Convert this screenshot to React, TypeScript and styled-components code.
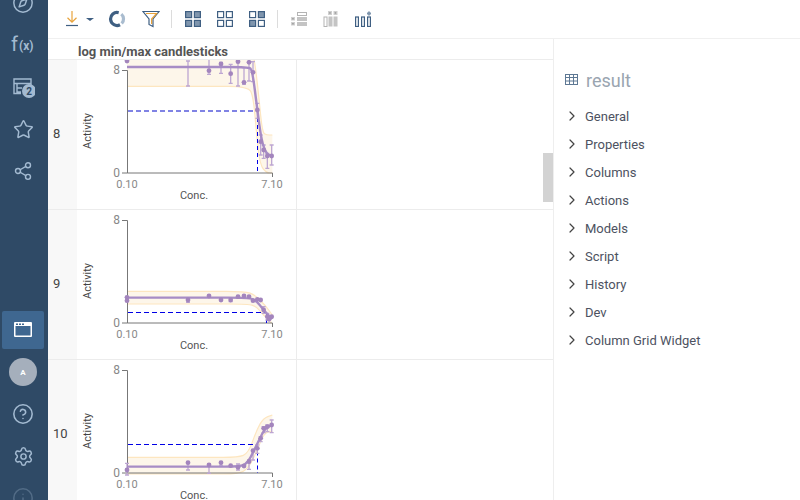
import React from "react";
import styled, { createGlobalStyle } from "styled-components";
import { ChevronRight, CircleHelp, Compass, Info, Settings, Share2, Star } from "lucide-react";

const GlobalStyle = createGlobalStyle`
  html, body {
    margin: 0;
    padding: 0;
    width: 800px;
    height: 500px;
    overflow: hidden;
    background: #fff;
    font-family: Roboto, "Liberation Sans", sans-serif;
  }
`;

const Page = styled.div`
  display: flex;
  width: 800px;
  height: 500px;
  overflow: hidden;
`;

const Sidebar = styled.nav`
  display: flex;
  flex-direction: column;
  flex: 0 0 48px;
  height: 500px;
  background: #2f4a66;
  color: #a3bad1;
  overflow: hidden;
`;

const NavTop = styled.div`
  display: flex;
  flex-direction: column;
  gap: 4px;
  margin-top: -16px;
`;

const NavBottom = styled.div`
  display: flex;
  flex-direction: column;
  gap: 4px;
  margin-top: auto;
  margin-bottom: -17px;
`;

const NavItem = styled.div<{ $active?: boolean; $dim?: boolean }>`
  display: flex;
  align-items: center;
  justify-content: center;
  flex: 0 0 38px;
  width: 42px;
  margin-left: 2px;
  border-radius: 2px;
  background: ${(p) => (p.$active ? "#3f6790" : "transparent")};
  opacity: ${(p) => (p.$dim ? 0.3 : 1)};
`;

const Avatar = styled.div`
  display: flex;
  align-items: center;
  justify-content: center;
  width: 28px;
  height: 28px;
  border-radius: 50%;
  background: #a5afbc;
  color: #fff;
  font-size: 8px;
  font-weight: 700;
`;

const Main = styled.div`
  display: flex;
  flex-direction: column;
  flex: 1;
  min-width: 0;
`;

const Toolbar = styled.div`
  display: flex;
  align-items: center;
  flex: 0 0 39px;
  box-sizing: border-box;
  padding-left: 12px;
  border-bottom: 1px solid #f0f0f0;
`;

const ToolGroup = styled.div`
  display: flex;
  align-items: center;
  justify-content: flex-start;
  gap: 7px;
  width: 41px;
  padding-left: 5px;
  box-sizing: border-box;
`;

const Tool = styled.div<{ $shift?: number }>`
  display: flex;
  align-items: center;
  justify-content: center;
  width: 32px;
  margin-left: ${(p) => p.$shift ?? 0}px;
`;

const Caret = styled.span`
  width: 0;
  height: 0;
  border-left: 4px solid transparent;
  border-right: 4px solid transparent;
  border-top: 3px solid #3f5f82;
`;

const Separator = styled.div`
  width: 1px;
  height: 18px;
  margin: 0 5px 0 4px;
  background: #dcdcdc;
`;

const Content = styled.div`
  display: flex;
  flex: 1;
  min-height: 0;
`;

const GridArea = styled.div`
  position: relative;
  flex: 0 0 505px;
  overflow: hidden;
`;

const GridHeader = styled.div`
  box-sizing: border-box;
  height: 21px;
  padding-left: 30px;
  border-bottom: 1px solid #ececec;
  color: #555;
  font-size: 13px;
  font-weight: 700;
  line-height: 26px;
  white-space: nowrap;
  overflow: hidden;
`;

const Row = styled.div`
  display: flex;
  box-sizing: border-box;
  height: 150px;
  border-bottom: 1px solid #ececec;
`;

const RowNumber = styled.div`
  display: flex;
  align-items: center;
  flex: 0 0 29px;
  box-sizing: border-box;
  padding: 0 0 2px 5px;
  background: #f8f8f8;
  color: #444;
  font-size: 13px;
`;

const Cell = styled.div`
  flex: 0 0 220px;
  box-sizing: border-box;
  border-right: 1px solid #ececec;
  overflow: hidden;
`;

const ScrollThumb = styled.div`
  position: absolute;
  top: 114px;
  right: 0;
  width: 10px;
  height: 49px;
  background: #d3d3d3;
`;

const Panel = styled.aside`
  flex: 1;
  box-sizing: border-box;
  padding-top: 27px;
  border-left: 1px solid #eeeeee;
`;

const PanelTitle = styled.div`
  display: flex;
  align-items: center;
  gap: 7px;
  height: 28px;
  margin-bottom: 8px;
  padding-left: 11px;
  color: #9aa5b0;
  font-size: 18px;
`;

const PanelItem = styled.div`
  display: flex;
  align-items: center;
  gap: 5px;
  height: 28px;
  padding-left: 10px;
  color: #4d5261;
  font-size: 13px;
  svg {
    color: #444;
  }
`;

const Blue = "#3f5f82";
const BlueFill = "#7f95ad";

const FxIcon = () => (
  <svg width="24" height="24" viewBox="0 0 24 24" fill="currentColor" fontFamily="Roboto, sans-serif">
    <text x="0" y="18" fontSize="20">f</text>
    <text x="8" y="17" fontSize="12" fontWeight="700">(x)</text>
  </svg>
);

const SchemaIcon = () => (
  <svg width="24" height="24" viewBox="0 0 24 24" fill="none" stroke="currentColor" strokeWidth="1.4">
    <path d="M10 18.5H3V4H20V10M3 8.5H20M6 8.5V18M6 13H11M6 17H10" />
    <circle cx="18" cy="16" r="7" fill="currentColor" stroke="none" />
    <text x="18" y="19.5" textAnchor="middle" fontSize="10" fontWeight="700" fill="#2f4a66" stroke="none" fontFamily="Roboto, sans-serif">2</text>
  </svg>
);

const WindowIcon = () => (
  <svg width="20" height="18" viewBox="0 0 20 18">
    <rect x="1" y="1" width="18" height="15" rx="1" fill="#fff" />
    <rect x="2.5" y="5" width="15" height="9.5" fill="#3f6790" />
    <path d="M3 2.5h2v1.5H3zM6 2.5h2v1.5H6zM9 2.5h2v1.5H9z" fill="#3f6790" />
  </svg>
);

const DownloadIcon = () => (
  <svg width="14" height="16" viewBox="0 0 14 16" fill="none" strokeWidth="1.2">
    <path d="M7 0V11M2.5 6.8L7 11.2L11.5 6.8" stroke="#e8a33d" />
    <path d="M1 14.5H13" stroke={Blue} />
  </svg>
);

const RingIcon = () => (
  <svg width="18" height="18" viewBox="0 0 18 18" fill="none" strokeWidth="3.2">
    <path d="M10.7 2.7A6.5 6.5 0 1 0 12 14.8" stroke={Blue} />
    <path d="M13.7 13.5A6.5 6.5 0 0 0 13.3 4.1" stroke="#a9bccf" />
  </svg>
);

const FilterIcon = () => (
  <svg width="18" height="18" viewBox="0 0 18 18" fill="none" strokeWidth="1.2">
    <path d="M1 1.5H17L11 9V16.5L7 14.5V9Z" stroke={Blue} />
    <path d="M4 3.5H14.5L9.6 9V14" stroke="#e8a33d" />
  </svg>
);

const QuadIcon = ({ filled }: { filled: boolean[] }) => (
  <svg width="16" height="16" viewBox="0 0 16 16" strokeWidth="1.2" stroke={Blue}>
    {[[0.6, 0.6], [9.4, 0.6], [0.6, 9.4], [9.4, 9.4]].map(([x, y], i) => (
      <rect key={i} x={x} y={y} width="6" height="6" fill={filled[i] ? BlueFill : "none"} />
    ))}
  </svg>
);

const RowsToolIcon = () => (
  <svg width="16" height="16" viewBox="0 0 16 16">
    <rect x="0" y="6" width="4" height="3.5" fill="#d0d0d0" />
    <rect x="0" y="11" width="4" height="3.5" fill="#d0d0d0" />
    <rect x="1.2" y="7" width="1.5" height="1.5" fill="#999" />
    <rect x="1.2" y="12" width="1.5" height="1.5" fill="#999" />
    <rect x="6.5" y="1.5" width="9" height="3" fill="none" stroke="#b4b4b4" />
    <rect x="6" y="6" width="10" height="4" fill="#c4c4c4" />
    <rect x="6" y="11" width="10" height="4" fill="#c4c4c4" />
  </svg>
);

const ColumnsToolIcon = () => (
  <svg width="16" height="16" viewBox="0 0 16 16">
    <rect x="5" y="0" width="4" height="4" fill="#d0d0d0" />
    <rect x="10.5" y="0" width="4" height="4" fill="#d0d0d0" />
    <rect x="6.2" y="1.2" width="1.5" height="1.5" fill="#999" />
    <rect x="11.7" y="1.2" width="1.5" height="1.5" fill="#999" />
    <rect x="1" y="6" width="3" height="9.5" fill="none" stroke="#b4b4b4" />
    <rect x="5.5" y="5.5" width="4" height="10" fill="#c4c4c4" />
    <rect x="10.5" y="5.5" width="4" height="10" fill="#c4c4c4" />
  </svg>
);

const AddColumnIcon = () => (
  <svg width="16" height="16" viewBox="0 0 16 16" fill="none" stroke={Blue} strokeWidth="1.2">
    <rect x="0.6" y="6" width="2.8" height="9.5" />
    <rect x="6.6" y="6" width="2.8" height="9.5" />
    <rect x="12.6" y="6" width="2.8" height="9.5" />
    <path d="M14 0.5V4.5M12 2.5H16" stroke="#7f95ad" strokeWidth="1.8" />
  </svg>
);

const TableIcon = () => (
  <svg width="14" height="12" viewBox="0 0 14 12" fill="none" stroke="#5e7894">
    <rect x="0.5" y="0.5" width="12" height="10" />
    <path d="M0.5 3.5H12.5M0.5 7H12.5M4.5 0.5V10.5M8.5 0.5V10.5" />
  </svg>
);

type Pt = number[];

interface PlotData {
  offset: number;
  curve: Pt[];
  bandTop: Pt[];
  bandBottom: Pt[];
  midY: number;
  midX: number;
  midPale?: boolean;
  points: Pt[];
}

const toLocal = (v: number) => v / 3 - 2;

const smooth = (pts: Pt[], dy: number) => {
  const p = pts.map(([x, y]) => [toLocal(x), y / 3 + dy]);
  let d = `M${p[0][0]} ${p[0][1]}`;
  for (let i = 1; i < p.length - 1; i++) {
    const mx = (p[i][0] + p[i + 1][0]) / 2;
    const my = (p[i][1] + p[i + 1][1]) / 2;
    d += ` Q${p[i][0]} ${p[i][1]} ${mx} ${my}`;
  }
  const last = p[p.length - 1];
  return `${d} L${last[0]} ${last[1]}`;
};

const bandPath = (top: Pt[], bottom: Pt[], dy: number) =>
  `${smooth(top, dy)} L${toLocal(bottom[bottom.length - 1][0])} ${bottom[bottom.length - 1][1] / 3 + dy} ` +
  smooth([...bottom].reverse(), dy).replace(/^M/, "L");

const Plot = ({ data }: { data: PlotData }) => {
  const { offset: dy, curve, bandTop, bandBottom, midY, midX, midPale, points } = data;
  return (
    <svg width="219" height="149" viewBox="0 0 219 149" fontFamily="Roboto, sans-serif" fontSize="11">
      <path d={bandPath(bandTop, bandBottom, dy)} fill="#fdf6ea" />
      <path d={smooth(bandTop, dy)} fill="none" stroke="#fde6c0" strokeWidth="1.2" />
      <path d={smooth(bandBottom, dy)} fill="none" stroke="#fde6c0" strokeWidth="1.2" />
      <path d={`M50.5 113H195.5M50.5 113V10.5M45 10.5H50.5M45 113H50.5M195.5 113V117`} fill="none" stroke="#777" />
      <path
        d={`M51 ${midY}H${midX}`}
        fill="none"
        stroke={midPale ? "#8083e4" : "#0000e6"}
        strokeWidth={midPale ? 2 : 1}
        strokeDasharray="5 3"
      />
      <path d={`M${midX} ${midY}V113`} stroke="#0000e6" strokeDasharray="4 3" fill="none" />
      <g stroke="#bda6d2" strokeWidth="1.3" fill="none">
        {points.filter((p) => p.length > 2).map(([x, , t, b], i) => {
          const lx = toLocal(x);
          return (
            <path
              key={i}
              d={`M${lx} ${t / 3 + dy}V${b / 3 + dy}M${lx - 2} ${t / 3 + dy}H${lx + 2}M${lx - 2} ${b / 3 + dy}H${lx + 2}`}
            />
          );
        })}
      </g>
      <path d={smooth(curve, dy)} fill="none" stroke="#a78cc5" strokeWidth="2.4" />
      <g fill="#a385bd">
        {points.filter((p) => p[1] >= 0).map(([x, y], i) => (
          <circle key={i} cx={toLocal(x)} cy={y / 3 + dy} r="2.4" />
        ))}
      </g>
      <text x="43" y="14" textAnchor="end" fontSize="12" fill="#888">8</text>
      <text x="43" y="117" textAnchor="end" fontSize="12" fill="#888">0</text>
      <text x="50" y="128" textAnchor="middle" fill="#888">0.10</text>
      <text x="195" y="128" textAnchor="middle" fill="#888">7.10</text>
      <text x="117" y="139" textAnchor="middle" fill="#555">Conc.</text>
      <text transform="translate(14 71) rotate(-90)" textAnchor="middle" fill="#444">Activity</text>
    </svg>
  );
};

const rows: { label: string; data: PlotData }[] = [
  {
    label: "8",
    data: {
      offset: -5,
      curve: [[156, 36], [400, 36], [520, 36], [532, 45], [547, 165], [560, 260], [575, 298], [592, 303]],
      bandTop: [[156, -30], [530, -30], [542, 40], [552, 130], [562, 232], [575, 240], [592, 240]],
      bandBottom: [[156, 94], [400, 94], [520, 94], [535, 125], [545, 240], [555, 330], [575, 354], [592, 354]],
      midY: 51,
      midX: 180.5,
      midPale: true,
      points: [
        [156, 18],
        [339, -1, 18, 93],
        [402, 47, 10, 58],
        [438, 27, 22, 55],
        [467, 56, 28, 85],
        [489, 20, 20, 93],
        [507, 82, 38, 88],
        [522, 22, 22, 78],
        [534, 52, 20, 80],
        [547, 165, 145, 190],
        [557, 260, 240, 300],
        [566, 285, 270, 310],
        [577, 303, 295, 340],
        [590, 303, 270, 330],
      ],
    },
  },
  {
    label: "9",
    data: {
      offset: 0,
      curve: [[156, 263], [400, 263], [520, 263], [545, 272], [565, 300], [592, 327]],
      bandTop: [[156, 244], [400, 244], [510, 244], [540, 255], [570, 285], [592, 315]],
      bandBottom: [[156, 282], [400, 282], [520, 282], [545, 290], [565, 315], [590, 340]],
      midY: 102.5,
      midX: 189.5,
      points: [
        [156, 262],
        [156, 272],
        [339, 270, 264, 277],
        [402, 258],
        [438, 270],
        [467, 270, 264, 275],
        [489, 260],
        [507, 258],
        [522, 260],
        [534, 272],
        [547, 268],
        [557, 270],
        [566, 300, 290, 310],
        [577, 320, 310, 330],
        [590, 320],
        [582, 328],
      ],
    },
  },
  {
    label: "10",
    data: {
      offset: 0,
      curve: [[156, 320], [400, 320], [500, 320], [520, 305], [535, 275], [555, 235], [570, 205], [592, 195]],
      bandTop: [[156, 292], [400, 292], [490, 292], [520, 280], [545, 210], [565, 175], [592, 165]],
      bandBottom: [[156, 342], [400, 342], [490, 342], [520, 325], [545, 275], [560, 235], [575, 215], [592, 215]],
      midY: 84.5,
      midX: 180.5,
      points: [
        [156, 330, 310, 345],
        [339, 308, 308, 330],
        [402, 315, 312, 340],
        [438, 308, 305, 318],
        [467, 317],
        [489, 322, 312, 330],
        [507, 318],
        [522, 305, 300, 328],
        [534, 272, 270, 300],
        [547, 265, 255, 280],
        [557, 235, 230, 245],
        [566, 205, 200, 218],
        [577, 200, 195, 215],
        [590, 195, 180, 218],
      ],
    },
  },
];

const panelItems = [
  "General",
  "Properties",
  "Columns",
  "Actions",
  "Models",
  "Script",
  "History",
  "Dev",
  "Column Grid Widget",
];

export default function App() {
  return (
    <Page>
      <GlobalStyle />
      <Sidebar>
        <NavTop>
          <NavItem><Compass size={22} strokeWidth={1.6} /></NavItem>
          <NavItem><FxIcon /></NavItem>
          <NavItem><SchemaIcon /></NavItem>
          <NavItem><Star size={21} strokeWidth={1.7} /></NavItem>
          <NavItem><Share2 size={20} strokeWidth={1.7} /></NavItem>
        </NavTop>
        <NavBottom>
          <NavItem $active><WindowIcon /></NavItem>
          <NavItem><Avatar>A</Avatar></NavItem>
          <NavItem><CircleHelp size={22} strokeWidth={1.7} /></NavItem>
          <NavItem><Settings size={21} strokeWidth={1.7} /></NavItem>
          <NavItem $dim><Info size={22} strokeWidth={1.7} /></NavItem>
        </NavBottom>
      </Sidebar>
      <Main>
        <Toolbar>
          <ToolGroup>
            <DownloadIcon />
            <Caret />
          </ToolGroup>
          <Tool><RingIcon /></Tool>
          <Tool $shift={2}><FilterIcon /></Tool>
          <Separator />
          <Tool><QuadIcon filled={[true, true, true, true]} /></Tool>
          <Tool><QuadIcon filled={[false, false, false, false]} /></Tool>
          <Tool><QuadIcon filled={[false, true, true, false]} /></Tool>
          <Separator />
          <Tool><RowsToolIcon /></Tool>
          <Tool><ColumnsToolIcon /></Tool>
          <Tool><AddColumnIcon /></Tool>
        </Toolbar>
        <Content>
          <GridArea>
            <GridHeader>log min/max candlesticks</GridHeader>
            {rows.map((r) => (
              <Row key={r.label}>
                <RowNumber>{r.label}</RowNumber>
                <Cell><Plot data={r.data} /></Cell>
              </Row>
            ))}
            <ScrollThumb />
          </GridArea>
          <Panel>
            <PanelTitle>
              <TableIcon />
              result
            </PanelTitle>
            {panelItems.map((item) => (
              <PanelItem key={item}>
                <ChevronRight size={16} strokeWidth={1.8} />
                {item}
              </PanelItem>
            ))}
          </Panel>
        </Content>
      </Main>
    </Page>
  );
}
